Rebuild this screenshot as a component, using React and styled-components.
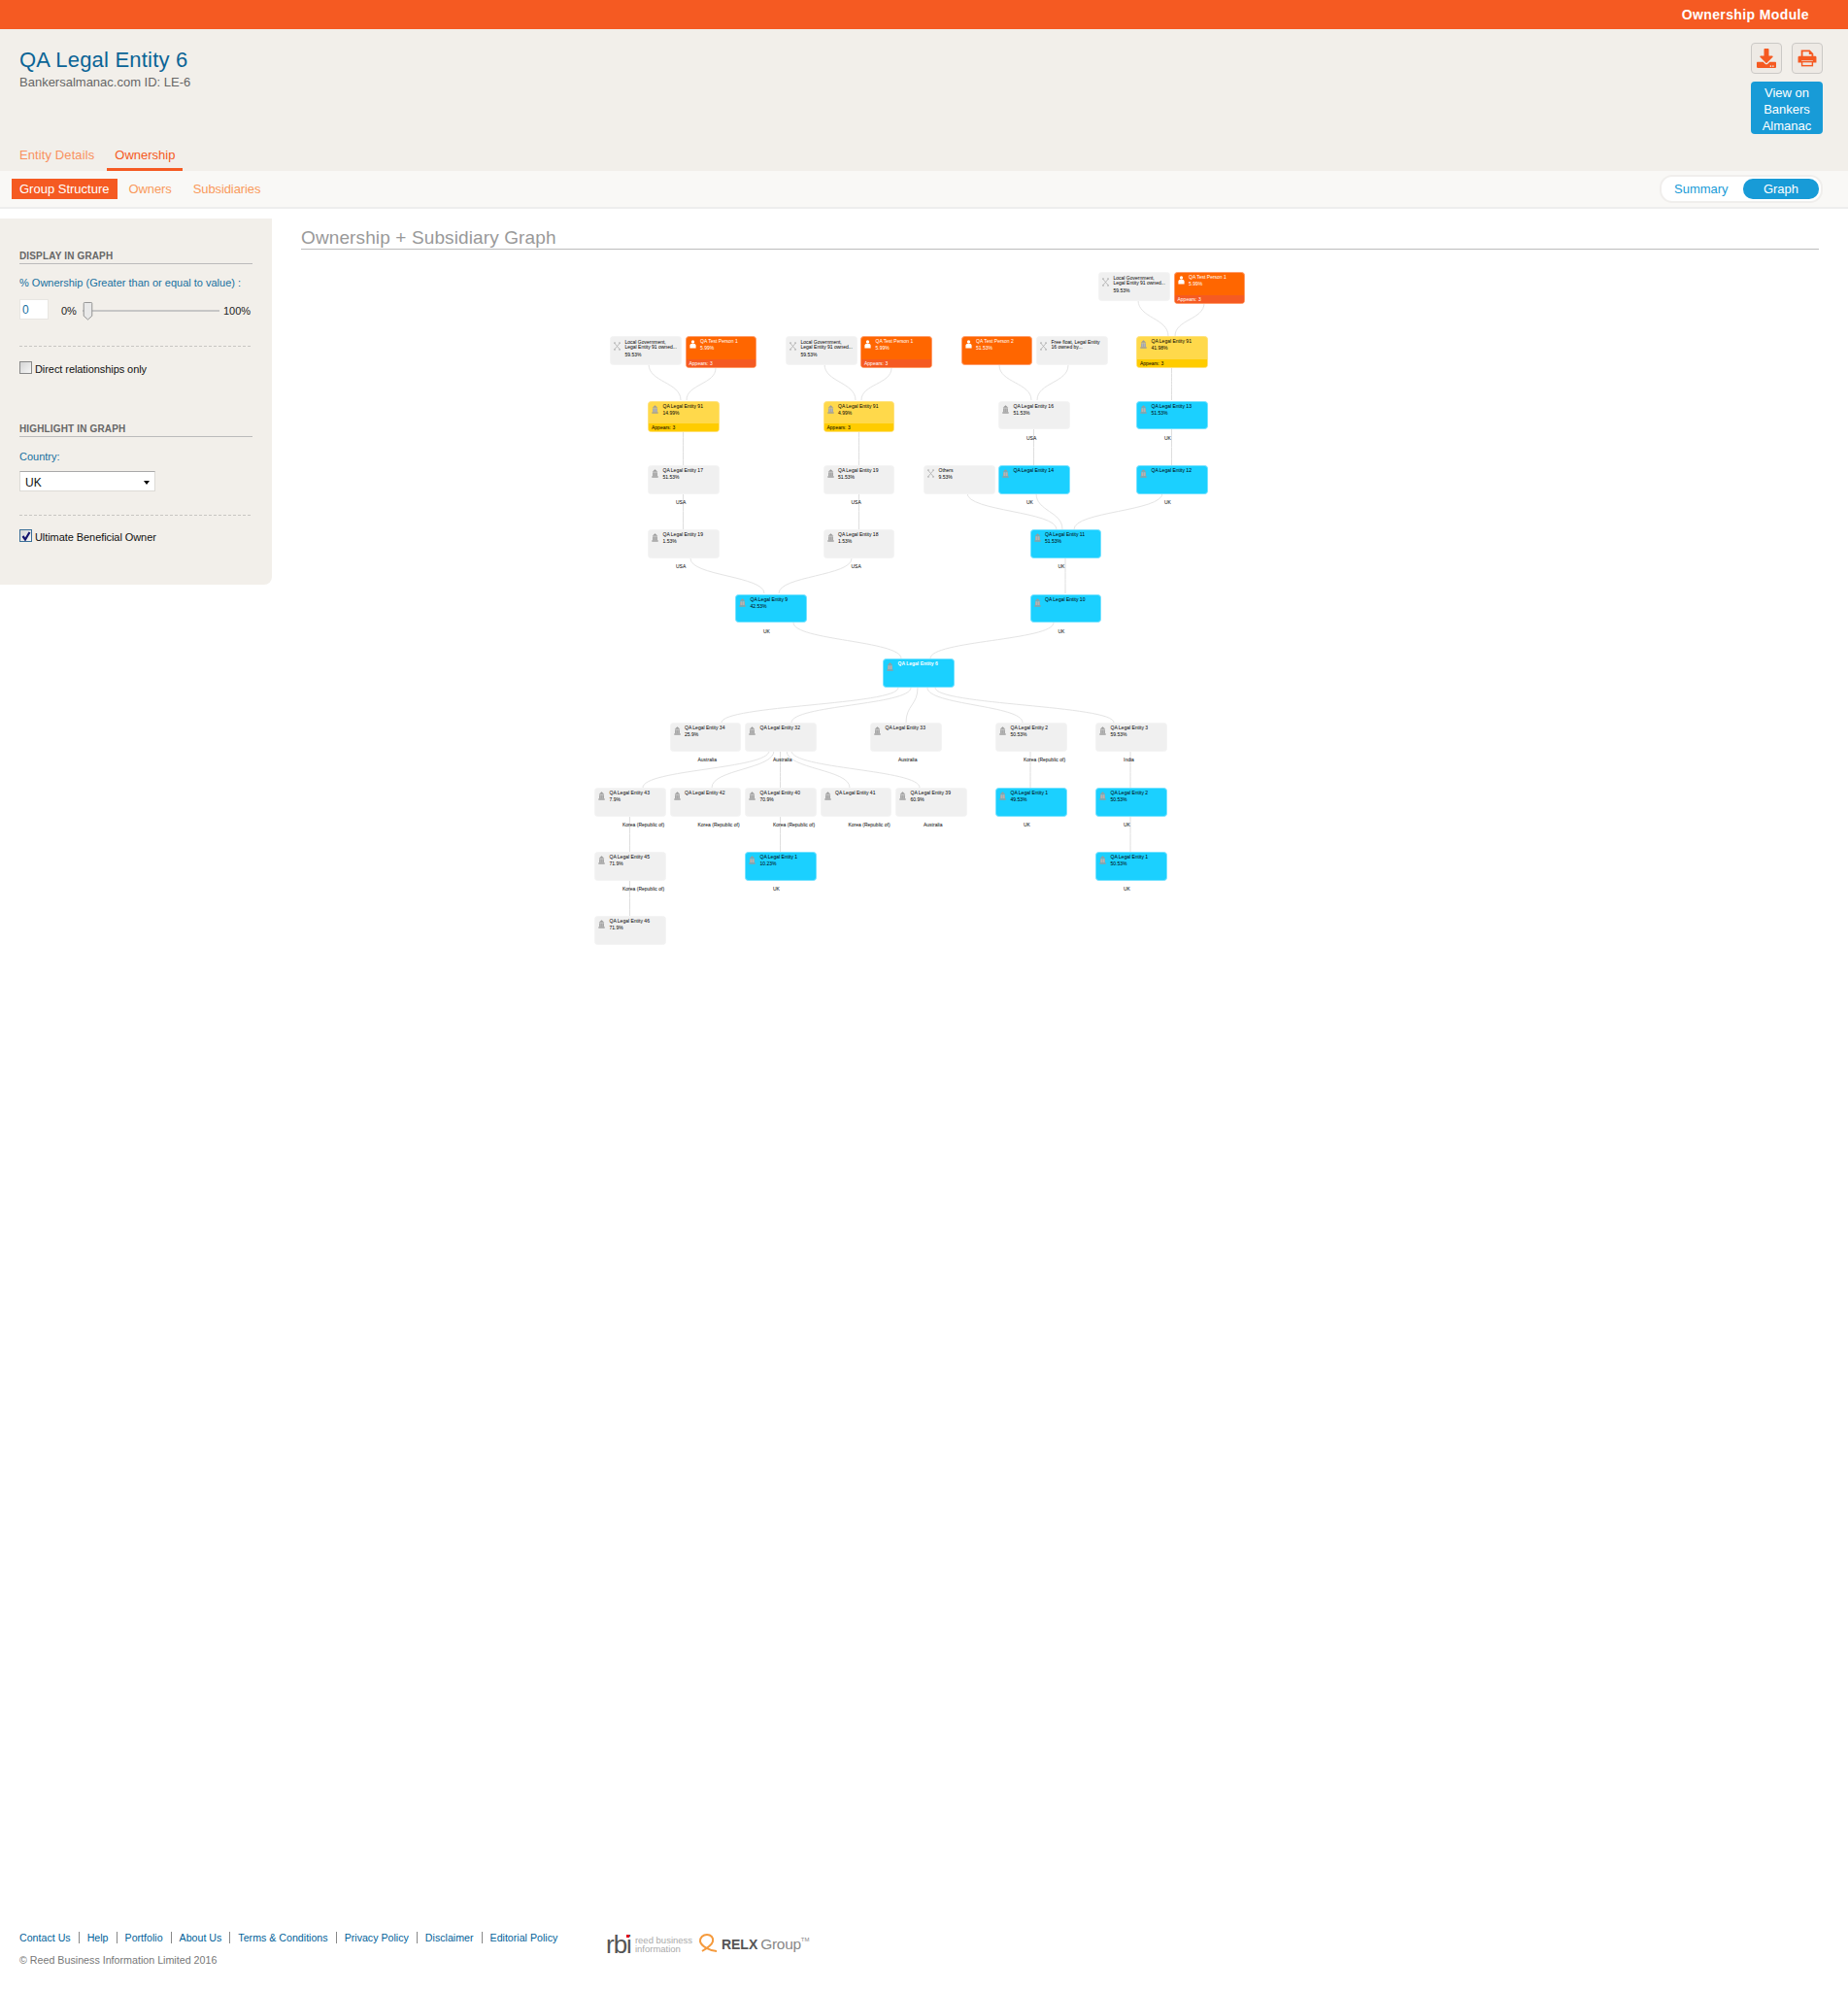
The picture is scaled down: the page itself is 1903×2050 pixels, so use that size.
import React from 'react'
import styled, { createGlobalStyle } from 'styled-components'
import { FaDownload } from 'react-icons/fa'

const GlobalStyle = createGlobalStyle`
  html, body {
    margin: 0;
    padding: 0;
    background: #fff;
    font-family: "Liberation Sans", Arial, sans-serif;
  }
`

const Page = styled.div`
  display: flex;
  flex-direction: column;
  min-height: 2050px;
`

const TopBar = styled.div`
  display: flex;
  align-items: center;
  justify-content: flex-end;
  height: 30px;
  padding-right: 40px;
  background: #f55a22;
  color: #fff;
  font-size: 14px;
  font-weight: bold;
  letter-spacing: 0.38px;
`

const Header = styled.header`
  display: flex;
  justify-content: space-between;
  height: 146px;
  padding: 0 26px 0 20px;
  background: #f2efea;
  position: relative;
`

const Title = styled.h1`
  margin: 20px 0 0;
  font-size: 22px;
  line-height: 24px;
  font-weight: normal;
  color: #0a6496;
  letter-spacing: 0.2px;
`

const SubTitle = styled.div`
  margin-top: 3px;
  font-size: 13px;
  line-height: 16px;
  color: #666;
`

const Tabs = styled.nav`
  position: absolute;
  left: 10px;
  bottom: 0;
  display: flex;
  gap: 3px;
`

const Tab = styled.a`
  display: block;
  height: 27px;
  padding: 0 ${(p) => (p.$active ? 8 : 10)}px;
  box-sizing: border-box;
  font-size: 13px;
  line-height: 22px;
  letter-spacing: ${(p) => (p.$active ? 0 : 0.1)}px;
  color: ${(p) => (p.$active ? '#f55a22' : '#f9915f')};
  border-bottom: 3px solid ${(p) => (p.$active ? '#f55a22' : 'transparent')};
`

const HeaderActions = styled.div`
  display: flex;
  flex-direction: column;
  gap: 8px;
  width: 74px;
  padding-top: 14px;
`

const IconRow = styled.div`
  display: flex;
  justify-content: space-between;
`

const IconButton = styled.button`
  display: flex;
  align-items: center;
  justify-content: center;
  width: 32px;
  height: 32px;
  padding: 0;
  box-sizing: border-box;
  border: 1px solid #cbc9c6;
  border-radius: 4px;
  background: #eeeae5;
  color: #f55a22;
  font-size: 20px;
`

const ViewButton = styled.a`
  display: block;
  height: 54px;
  padding-top: 3px;
  box-sizing: border-box;
  border-radius: 4px;
  background: #189bd7;
  color: #fff;
  font-size: 13px;
  line-height: 17px;
  text-align: center;
`

const SubNav = styled.div`
  display: flex;
  align-items: center;
  justify-content: space-between;
  height: 39px;
  padding: 0 26px 0 12px;
  box-sizing: border-box;
  background: #f9f8f6;
  border-bottom: 2px solid #eeeeee;
`

const SubNavLinks = styled.div`
  display: flex;
  gap: 6px;
`

const SubNavLink = styled.a`
  height: 21px;
  padding: 0 ${(p) => (p.$active ? 8 : 6)}px;
  margin-right: ${(p) => (p.$active ? 0 : 4)}px;
  background: ${(p) => (p.$active ? '#f55a22' : 'transparent')};
  color: ${(p) => (p.$active ? '#fff' : '#f99a5c')};
  font-size: 13px;
  line-height: 21px;
  letter-spacing: ${(p) => (p.$active ? 0 : -0.1)}px;
`

const Toggle = styled.div`
  display: flex;
  align-items: center;
  justify-content: space-between;
  width: 168px;
  height: 29px;
  padding: 0 2px 0 13px;
  box-sizing: border-box;
  background: #fff;
  border: 2px solid #f0eeec;
  border-radius: 13px;
`

const ToggleItem = styled.span`
  font-size: 13px;
  line-height: 21px;
  text-align: center;
  color: ${(p) => (p.$active ? '#fff' : '#189bd7')};
  background: ${(p) => (p.$active ? '#189bd7' : 'transparent')};
  border-radius: 10px;
  width: ${(p) => (p.$active ? '78px' : 'auto')};
`

const Body = styled.div`
  display: flex;
  align-items: flex-start;
  padding-top: 10px;
`

const Sidebar = styled.aside`
  flex: none;
  width: 280px;
  box-sizing: border-box;
  padding: 32px 20px 44px;
  background: #f2efea;
  border-bottom-right-radius: 8px;
`

const SideHeading = styled.h3`
  margin: ${(p) => p.$top || 0}px 0 0;
  border-bottom: 1px solid #bbb;
  font-size: 10px;
  line-height: 14px;
  font-weight: bold;
  color: #666;
  letter-spacing: 0.15px;
`

const FieldLabel = styled.div`
  margin-top: ${(p) => p.$top}px;
  font-size: 11px;
  line-height: 14px;
  color: #17709f;
`

const SliderRow = styled.div`
  display: flex;
  align-items: center;
  height: 22px;
  margin-top: 9px;
  padding-top: 4px;
  box-sizing: border-box;
  font-size: 11px;
  color: #222;
`

const NumberBox = styled.div`
  align-self: flex-start;
  width: 30px;
  height: 21px;
  margin: -3px 13px 0 0;
  padding-left: 2px;
  box-sizing: border-box;
  background: #fff;
  border: 1px solid #e8e6e2;
  color: #17709f;
  font-size: 12px;
  line-height: 20px;
`

const Slider = styled.div`
  position: relative;
  width: 141px;
  height: 2px;
  margin: 0 4px 0 6px;
  background: #c6c6c6;
  svg {
    position: absolute;
    left: 0;
    top: -8px;
  }
`

const Dashed = styled.div`
  margin-top: ${(p) => p.$top}px;
  border-top: 1px dashed #c8c6c2;
  width: 238px;
`

const CheckRow = styled.div`
  display: flex;
  margin-top: ${(p) => p.$top}px;
  height: 13px;
  font-size: 11px;
  line-height: 17px;
  letter-spacing: -0.07px;
  color: #111;
`

const CheckBox = styled.span`
  display: flex;
  align-items: center;
  justify-content: center;
  width: 13px;
  height: 13px;
  margin-right: 3px;
  box-sizing: border-box;
  border: 1px solid ${(p) => (p.$checked ? '#3a6f98' : '#888')};
  background: linear-gradient(135deg, #d5d5d5, #f6f6f6);
`

const CountrySelect = styled.div`
  display: flex;
  align-items: center;
  justify-content: space-between;
  width: 140px;
  height: 21px;
  margin-top: 8px;
  padding: 2px 5px 0 5px;
  box-sizing: border-box;
  background: #fff;
  border: 1px solid #dcdad6;
  border-top-color: #a9a9a9;
  font-size: 12px;
  color: #111;
  &::after {
    content: '';
    border: 3.5px solid transparent;
    border-top: 4px solid #000;
    border-bottom: 0;
  }
`

const Content = styled.main`
  flex: 1;
  padding: 9px 30px 0;
`

const GraphHeading = styled.h2`
  margin: 0;
  border-bottom: 1px solid #bbb;
  font-size: 19px;
  line-height: 22px;
  font-weight: normal;
  color: #999;
  letter-spacing: 0.12px;
`

const Canvas = styled.div`
  position: relative;
  height: 730px;
  svg.edges {
    position: absolute;
    inset: 0;
  }
`

const nodeColors = {
  grey: { bg: '#f0f0f0', fg: '#000', strip: '#f0f0f0', border: '#f4f4f4' },
  blue: { bg: '#1bd0ff', fg: '#000', strip: '#1bd0ff', border: '#76e2ff' },
  yellow: { bg: '#ffd94b', fg: '#000', strip: '#ffcc00', border: '#ffe27a' },
  orange: { bg: '#ff6600', fg: '#fff', strip: '#f55a22', border: '#ff9c6a' },
  root: { bg: '#1bd0ff', fg: '#fff', strip: '#1bd0ff', border: '#76e2ff' },
}

const NodeBox = styled.div.attrs((p) => ({ style: { left: p.$x, top: p.$y } }))`
  position: absolute;
  display: flex;
  flex-direction: column;
  width: 73.5px;
  height: ${(p) => (p.$appears ? 32.5 : 29.5)}px;
  box-sizing: border-box;
  overflow: hidden;
  border: 0.5px solid ${(p) => nodeColors[p.$kind].border};
  border-radius: 3.5px;
  background: ${(p) => nodeColors[p.$kind].bg};
  color: ${(p) => nodeColors[p.$kind].fg};
  font-size: 5px;
  line-height: 7px;
`

const NodeMain = styled.div`
  flex: 1;
  display: flex;
  padding: ${(p) => (p.$wide ? 2.5 : 1)}px 2px 0 3px;
`

const NodeIcon = styled.svg`
  flex: none;
  width: 7px;
  height: 9px;
  margin: 2px 4.5px 0 0;
`

const NodeName = styled.div`
  line-height: ${(p) => (p.$wrap ? 5 : 7)}px;
  font-weight: ${(p) => (p.$bold ? 'bold' : 'normal')};
`

const NodePct = styled.div`
  margin-top: ${(p) => (p.$wrap ? 2 : 0)}px;
`

const NodeStrip = styled.div`
  height: 8px;
  padding-left: 3px;
  background: ${(p) => nodeColors[p.$kind].strip};
  line-height: 8px;
`

const CountryLabel = styled.span.attrs((p) => ({ style: { left: p.$x, top: p.$y } }))`
  position: absolute;
  font-size: 5px;
  line-height: 7px;
  color: #000;
  white-space: nowrap;
`

const Footer = styled.footer`
  display: flex;
  margin-top: auto;
  height: 61px;
  padding-left: 20px;
`

const FooterLeft = styled.div`
  width: 604px;
`

const FooterLinks = styled.div`
  display: flex;
  height: 14px;
`

const FooterLink = styled.a`
  padding-right: 8px;
  margin-right: 8px;
  border-right: 1px solid #888;
  font-size: 10.65px;
  line-height: 13px;
  height: 12px;
  color: #005f99;
  &:last-child {
    border-right: 0;
  }
`

const Copyright = styled.div`
  margin-top: 8px;
  font-size: 10.7px;
  line-height: 14px;
  color: #777;
`

const Logos = styled.div`
  display: flex;
  align-items: center;
  height: 25px;
  color: #666;
`

const RbiMark = styled.span`
  position: relative;
  font-size: 26px;
  line-height: 26px;
  color: #555;
  letter-spacing: -1px;
  margin-right: 4px;
  &::after {
    content: '';
    position: absolute;
    right: 1.5px;
    top: 3px;
    width: 3px;
    height: 3px;
    background: #e2001a;
  }
`

const RbiText = styled.span`
  width: 60px;
  font-size: 9.5px;
  line-height: 9px;
  color: #aaa;
`

const RelxMark = styled.svg`
  width: 22px;
  height: 24px;
  margin: 0 2px 0 5px;
`

const RelxWord = styled.span`
  font-size: 14px;
  font-weight: bold;
  color: #555;
`

const GroupWord = styled.span`
  margin-left: 3px;
  font-size: 15.5px;
  color: #888;
  letter-spacing: -0.3px;
  sup {
    font-size: 6px;
    vertical-align: 8px;
    letter-spacing: 0;
  }
`

// page offset of the canvas, node positions below were read off the full page
const OX = 310
const OY = 257

const BankIcon = () => (
  <NodeIcon viewBox="0 0 7 9">
    <path d="M3.5 0.3 L6.3 2.8 H0.7 Z" fill="#9b9b9b" />
    <rect x="1" y="3.3" width="5" height="3.9" fill="#a8a8a8" />
    <rect x="2.6" y="3.3" width="0.4" height="3.9" fill="#c8c8c8" />
    <rect x="4" y="3.3" width="0.4" height="3.9" fill="#c8c8c8" />
    <rect x="0.3" y="7.3" width="6.4" height="1.4" fill="#9b9b9b" />
  </NodeIcon>
)

const CrossIcon = () => (
  <NodeIcon viewBox="0 0 7 9">
    <path d="M0.5 1 L6.5 8 M6.5 1 L0.5 8" stroke="#b0b0b0" strokeWidth="0.8" />
    <path d="M0 1h2M5 1h2M0 8h2M5 8h2" stroke="#a8a8a8" strokeWidth="0.9" />
  </NodeIcon>
)

const PersonIcon = () => (
  <NodeIcon viewBox="0 0 7 9">
    <circle cx="3.5" cy="2" r="1.7" fill="#fff" />
    <path d="M0.4 8.5 V5.8 C0.4 4.6 1.4 4 2.2 4 H4.8 C5.6 4 6.6 4.6 6.6 5.8 V8.5 Z" fill="#fff" />
  </NodeIcon>
)

const PrintIcon = () => (
  <svg width="20" height="18" viewBox="0 0 22 20">
    <path d="M5 8 V1.5 H13.5 L17 5 V8" fill="none" stroke="#f55a22" strokeWidth="2" />
    <path d="M13 1.5 V5.5 H17" fill="#f55a22" />
    <path d="M2 7.5 H20 Q21.5 7.5 21.5 9 V15 H17.5 V12.5 H4.5 V15 H0.5 V9 Q0.5 7.5 2 7.5 Z" fill="#f55a22" />
    <rect x="5" y="14" width="12" height="4.5" fill="none" stroke="#f55a22" strokeWidth="1.6" />
  </svg>
)

const row = [280, 346, 412.5, 479, 545, 611.5, 678, 744, 811, 877, 943]

const nodes = [
  { x: 1131, r: 0, kind: 'grey', icon: 'cross', name: 'Local Government, Legal Entity 91 owned...', pct: '59.53%', wrap: true },
  { x: 1208.5, r: 0, kind: 'orange', icon: 'person', name: 'QA Test Person 1', pct: '5.99%', appears: 3 },
  { x: 628, r: 1, kind: 'grey', icon: 'cross', name: 'Local Government, Legal Entity 91 owned...', pct: '59.53%', wrap: true },
  { x: 705.5, r: 1, kind: 'orange', icon: 'person', name: 'QA Test Person 1', pct: '5.99%', appears: 3 },
  { x: 809, r: 1, kind: 'grey', icon: 'cross', name: 'Local Government, Legal Entity 91 owned...', pct: '59.53%', wrap: true },
  { x: 886, r: 1, kind: 'orange', icon: 'person', name: 'QA Test Person 1', pct: '5.99%', appears: 3 },
  { x: 989.5, r: 1, kind: 'orange', icon: 'person', name: 'QA Test Person 2', pct: '51.53%' },
  { x: 1067, r: 1, kind: 'grey', icon: 'cross', name: 'Free float, Legal Entity 16 owned by...', wrap: true },
  { x: 1170, r: 1, kind: 'yellow', name: 'QA Legal Entity 91', pct: '41.98%', appears: 3 },
  { x: 667, r: 2, kind: 'yellow', name: 'QA Legal Entity 91', pct: '14.99%', appears: 3 },
  { x: 847.5, r: 2, kind: 'yellow', name: 'QA Legal Entity 91', pct: '4.99%', appears: 3 },
  { x: 1028, r: 2, kind: 'grey', name: 'QA Legal Entity 16', pct: '51.53%', label: 'USA' },
  { x: 1170, r: 2, kind: 'blue', name: 'QA Legal Entity 13', pct: '51.53%', label: 'UK' },
  { x: 667, r: 3, kind: 'grey', name: 'QA Legal Entity 17', pct: '51.53%', label: 'USA' },
  { x: 847.5, r: 3, kind: 'grey', name: 'QA Legal Entity 19', pct: '51.53%', label: 'USA' },
  { x: 951, r: 3, kind: 'grey', icon: 'cross', name: 'Others', pct: '9.53%' },
  { x: 1028, r: 3, kind: 'blue', name: 'QA Legal Entity 14', label: 'UK' },
  { x: 1170, r: 3, kind: 'blue', name: 'QA Legal Entity 12', label: 'UK' },
  { x: 667, r: 4, kind: 'grey', name: 'QA Legal Entity 19', pct: '1.53%', label: 'USA' },
  { x: 847.5, r: 4, kind: 'grey', name: 'QA Legal Entity 18', pct: '1.53%', label: 'USA' },
  { x: 1060.5, r: 4, kind: 'blue', name: 'QA Legal Entity 11', pct: '51.53%', label: 'UK' },
  { x: 757, r: 5, kind: 'blue', name: 'QA Legal Entity 9', pct: '42.53%', label: 'UK' },
  { x: 1060.5, r: 5, kind: 'blue', name: 'QA Legal Entity 10', label: 'UK' },
  { x: 909, r: 6, kind: 'root', name: 'QA Legal Entity 6', bold: true },
  { x: 689.5, r: 7, kind: 'grey', name: 'QA Legal Entity 34', pct: '25.9%', label: 'Australia' },
  { x: 767, r: 7, kind: 'grey', name: 'QA Legal Entity 32', label: 'Australia' },
  { x: 896, r: 7, kind: 'grey', name: 'QA Legal Entity 33', label: 'Australia' },
  { x: 1025, r: 7, kind: 'grey', name: 'QA Legal Entity 2', pct: '50.53%', label: 'Korea (Republic of)' },
  { x: 1128, r: 7, kind: 'grey', name: 'QA Legal Entity 3', pct: '59.53%', label: 'India' },
  { x: 612, r: 8, kind: 'grey', name: 'QA Legal Entity 43', pct: '7.9%', label: 'Korea (Republic of)' },
  { x: 689.5, r: 8, kind: 'grey', name: 'QA Legal Entity 42', label: 'Korea (Republic of)' },
  { x: 767, r: 8, kind: 'grey', name: 'QA Legal Entity 40', pct: '70.9%', label: 'Korea (Republic of)' },
  { x: 844.5, r: 8, kind: 'grey', name: 'QA Legal Entity 41', label: 'Korea (Republic of)' },
  { x: 922, r: 8, kind: 'grey', name: 'QA Legal Entity 39', pct: '60.9%', label: 'Australia' },
  { x: 1025, r: 8, kind: 'blue', name: 'QA Legal Entity 1', pct: '49.53%', label: 'UK' },
  { x: 1128, r: 8, kind: 'blue', name: 'QA Legal Entity 2', pct: '50.53%', label: 'UK' },
  { x: 612, r: 9, kind: 'grey', name: 'QA Legal Entity 45', pct: '71.9%', label: 'Korea (Republic of)' },
  { x: 767, r: 9, kind: 'blue', name: 'QA Legal Entity 1', pct: '10.23%', label: 'UK' },
  { x: 1128, r: 9, kind: 'blue', name: 'QA Legal Entity 1', pct: '50.53%', label: 'UK' },
  { x: 612, r: 10, kind: 'grey', name: 'QA Legal Entity 46', pct: '71.9%' },
]

// x1, y1, x2, y2
const edges = [
  [1172, 309, 1203, 346], [1240, 312, 1210, 346],
  [668, 375, 701, 412], [737, 379, 707, 412],
  [849, 375, 881, 412], [918, 379, 887, 412],
  [1029, 376, 1062, 412], [1100, 376, 1068, 412],
  [1206.5, 379, 1206.5, 412],
  [703.5, 445, 703.5, 479], [884.5, 445, 884.5, 479],
  [1064.5, 442, 1064.5, 479], [1206.5, 442, 1206.5, 479],
  [703.5, 508, 703.5, 545], [884.5, 508, 884.5, 545],
  [996, 508, 1088, 545], [1067, 508, 1094, 545], [1197, 508, 1106, 545],
  [711, 575, 787, 611], [877, 575, 802, 611], [1097, 575, 1097, 611],
  [817, 641, 928, 678], [1085, 641, 958, 678],
  [925, 708, 743, 744], [938, 708, 815, 744], [945, 708, 933, 744],
  [955, 708, 1053, 744], [963, 708, 1147, 744],
  [792, 773, 662, 811], [797, 773, 733, 811], [803.5, 773, 803.5, 811],
  [810, 773, 875, 811], [815, 773, 947, 811],
  [1061, 773, 1061, 811], [1164, 773, 1164, 811],
  [648.5, 840, 648.5, 877], [803.5, 840, 803.5, 877], [1164, 840, 1164, 877],
  [648.5, 906, 648.5, 943],
]

const footerLinks = ['Contact Us', 'Help', 'Portfolio', 'About Us', 'Terms & Conditions', 'Privacy Policy', 'Disclaimer', 'Editorial Policy']

const edgePath = ([x1, y1, x2, y2]) => {
  const m = (y1 + y2) / 2
  return `M${x1 - OX} ${y1 - OY} C${x1 - OX} ${m - OY} ${x2 - OX} ${m - OY} ${x2 - OX} ${y2 - OY}`
}

const Node = ({ n }) => {
  const y = row[n.r] - OY
  return (
    <>
      <NodeBox $x={n.x - OX} $y={y} $kind={n.kind} $appears={!!n.appears}>
        <NodeMain $wide={n.wrap}>
          {n.icon === 'cross' ? <CrossIcon /> : n.icon === 'person' ? <PersonIcon /> : <BankIcon />}
          <div>
            <NodeName $wrap={n.wrap} $bold={n.bold}>{n.name}</NodeName>
            {n.pct && <NodePct $wrap={n.wrap}>{n.pct}</NodePct>}
          </div>
        </NodeMain>
        {n.appears && <NodeStrip $kind={n.kind}>Appears: {n.appears}</NodeStrip>}
      </NodeBox>
      {n.label && <CountryLabel $x={n.x - OX + 29} $y={y + 35}>{n.label}</CountryLabel>}
    </>
  )
}

const App = () => (
  <Page>
    <GlobalStyle />
    <TopBar>Ownership Module</TopBar>
    <Header>
      <div>
        <Title>QA Legal Entity 6</Title>
        <SubTitle>Bankersalmanac.com ID: LE-6</SubTitle>
      </div>
      <Tabs>
        <Tab>Entity Details</Tab>
        <Tab $active>Ownership</Tab>
      </Tabs>
      <HeaderActions>
        <IconRow>
          <IconButton><FaDownload /></IconButton>
          <IconButton><PrintIcon /></IconButton>
        </IconRow>
        <ViewButton>View on Bankers Almanac</ViewButton>
      </HeaderActions>
    </Header>
    <SubNav>
      <SubNavLinks>
        <SubNavLink $active>Group Structure</SubNavLink>
        <SubNavLink>Owners</SubNavLink>
        <SubNavLink>Subsidiaries</SubNavLink>
      </SubNavLinks>
      <Toggle>
        <ToggleItem>Summary</ToggleItem>
        <ToggleItem $active>Graph</ToggleItem>
      </Toggle>
    </SubNav>
    <Body>
      <Sidebar>
        <SideHeading>DISPLAY IN GRAPH</SideHeading>
        <FieldLabel $top={12}>% Ownership (Greater than or equal to value) :</FieldLabel>
        <SliderRow>
          <NumberBox>0</NumberBox>
          0%
          <Slider>
            <svg width="11" height="19" viewBox="0 0 11 20">
              <path d="M1 1.5 Q1 0.5 2 0.5 H9 Q10 0.5 10 1.5 V15 L5.5 19 L1 15 Z" fill="#e9e9e9" stroke="#8e8e8e" />
            </svg>
          </Slider>
          100%
        </SliderRow>
        <Dashed $top={27} />
        <CheckRow $top={15}>
          <CheckBox />
          Direct relationships only
        </CheckRow>
        <SideHeading $top={50}>HIGHLIGHT IN GRAPH</SideHeading>
        <FieldLabel $top={13}>Country:</FieldLabel>
        <CountrySelect>UK</CountrySelect>
        <Dashed $top={24} />
        <CheckRow $top={14}>
          <CheckBox $checked>
            <svg width="10" height="10" viewBox="0 0 10 10">
              <path d="M1.5 5 L4 8.5 L8.5 1" fill="none" stroke="#14146e" strokeWidth="2.2" />
            </svg>
          </CheckBox>
          Ultimate Beneficial Owner
        </CheckRow>
      </Sidebar>
      <Content>
        <GraphHeading>Ownership + Subsidiary Graph</GraphHeading>
        <Canvas>
          <svg className="edges" width="1563" height="730">
            {edges.map((e, i) => (
              <path key={i} d={edgePath(e)} fill="none" stroke={e[0] === e[2] ? '#dedede' : '#e4e4e4'} strokeWidth="1" />
            ))}
          </svg>
          {nodes.map((n, i) => (
            <Node key={i} n={n} />
          ))}
        </Canvas>
      </Content>
    </Body>
    <Footer>
      <FooterLeft>
        <FooterLinks>
          {footerLinks.map((l) => (
            <FooterLink key={l}>{l}</FooterLink>
          ))}
        </FooterLinks>
        <Copyright>© Reed Business Information Limited 2016</Copyright>
      </FooterLeft>
      <Logos>
        <RbiMark>rbi</RbiMark>
        <RbiText>reed business information</RbiText>
        <RelxMark viewBox="0 0 22 24">
          <path d="M19 19 C13 19 3 14 2 9 C1.5 5 5 2 9 2 C13 2 16 5 15 9 C14 13 9 16 4 19" fill="none" stroke="#f59a3c" strokeWidth="2" />
        </RelxMark>
        <RelxWord>RELX</RelxWord>
        <GroupWord>Group<sup>TM</sup></GroupWord>
      </Logos>
    </Footer>
  </Page>
)

export default App
